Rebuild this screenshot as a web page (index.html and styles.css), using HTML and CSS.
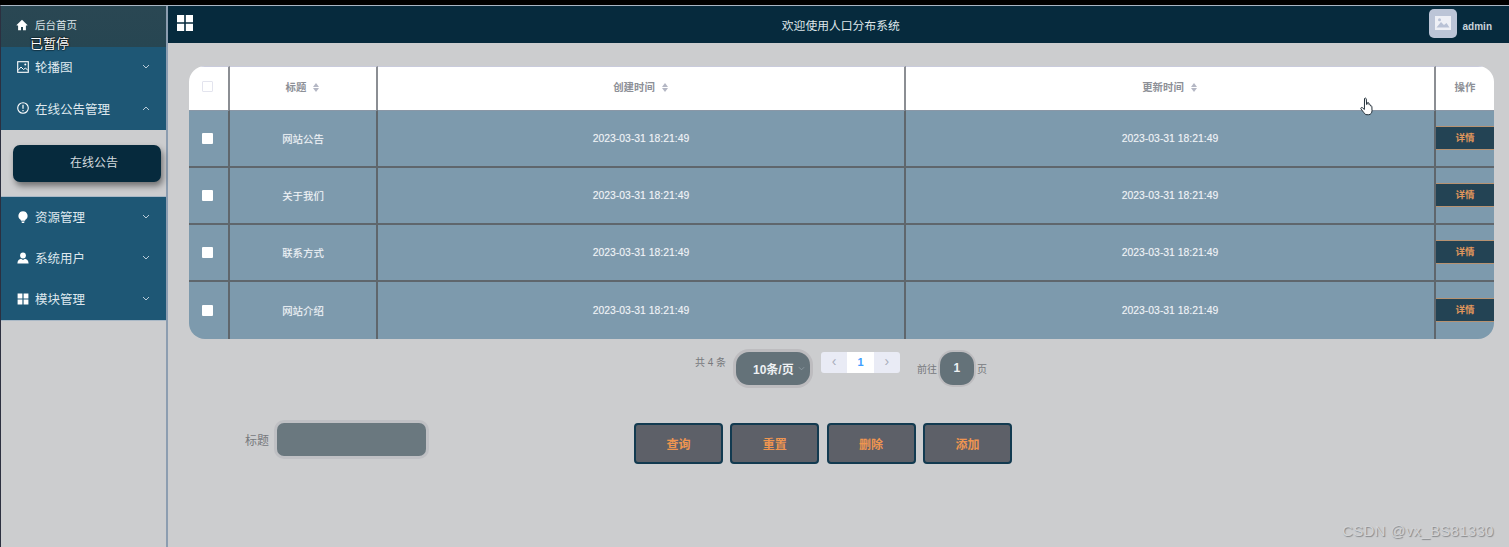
FILE: index.html
```html
<!DOCTYPE html>
<html lang="zh-CN">
<head>
  <meta charset="UTF-8" />
  <title>人口分布系统</title>
  <link rel="stylesheet" href="styles.css">
</head>
<body>

<div class="app">
  <aside class="side">
    <div class="menu-home">
      <svg class="ic-home" viewBox="0 0 12 12"><path fill="#fff" d="M6 .8 .6 6v.6h1.500v4.600h2.900V8h2v3.200h2.900V6.600h1.500V6z"/></svg>
      <span>后台首页</span>
    </div>
    <div class="menu-item">
      <svg class="ic" viewBox="0 0 12 12"><rect x=".7" y=".7" width="10.600" height="10.600" fill="none" stroke="#fff" stroke-width="1.100"/><path fill="none" stroke="#fff" d="M1 9.500 4 6l2.500 2.500L8.500 7l2.500 2.500"/><circle cx="8.300" cy="3.600" r="1" fill="#fff"/></svg>
      <span class="menu-text">轮播图</span>
      <svg class="arrow" viewBox="0 0 8 5"><path d="M1 1l3 3 3-3"/></svg>
    </div>
    <div class="menu-item">
      <svg class="ic" viewBox="0 0 12 12"><circle cx="6" cy="6" r="5.300" fill="none" stroke="#fff" stroke-width="1.100"/><path stroke="#fff" stroke-width="1.200" d="M6 2.800v4M6 8v1.300"/></svg>
      <span class="menu-text">在线公告管理</span>
      <svg class="arrow" viewBox="0 0 8 5"><path d="M1 4l3-3 3 3"/></svg>
    </div>
    <div class="submenu">
      <div class="sub-btn">在线公告</div>
    </div>
    <div class="menu-group">
      <div class="menu-item menu-item-low">
        <svg class="ic" viewBox="0 0 12 12"><path fill="#fff" d="M6 .2a4.600 4.600 0 0 0-2.400 8.500L4 9.800h4l.4-1.100A4.600 4.600 0 0 0 6 .2zM4.500 10.400h3v.8L6.800 12H5.200l-.7-.8z"/></svg>
        <span class="menu-text">资源管理</span>
        <svg class="arrow" viewBox="0 0 8 5"><path d="M1 1l3 3 3-3"/></svg>
      </div>
      <div class="menu-item menu-item-low">
        <svg class="ic" viewBox="0 0 12 12"><circle cx="6" cy="3.500" r="2.900" fill="#fff"/><path fill="#fff" d="M.4 11.500c0-3 2-4.500 3.600-4.700L6 8l2-1.200c1.600.2 3.600 1.700 3.600 4.700z"/></svg>
        <span class="menu-text">系统用户</span>
        <svg class="arrow" viewBox="0 0 8 5"><path d="M1 1l3 3 3-3"/></svg>
      </div>
      <div class="menu-item menu-item-low">
        <svg class="ic" viewBox="0 0 12 12"><path fill="#fff" d="M.6.600h4.800v4.800H.6zM6.600.600h4.800v4.800H6.600zM.6 6.600h4.800v4.800H.6zM6.600 6.600h4.800v4.800H6.600z"/></svg>
        <span class="menu-text">模块管理</span>
        <svg class="arrow" viewBox="0 0 8 5"><path d="M1 1l3 3 3-3"/></svg>
      </div>
    </div>
  </aside>

  <div class="main">
    <header class="topbar">
      <svg class="ic-grid" viewBox="0 0 16 16"><path fill="#fff" d="M0 0h7.200v7.200H0zM8.800 0H16v7.200H8.800zM0 8.800h7.200V16H0zM8.800 8.800H16V16H8.800z"/></svg>
      <div class="top-title">欢迎使用人口分布系统</div>
      <div class="avatar">
        <svg viewBox="0 0 16 14"><path fill="#eef0f6" d="M0 0h16v14H0z"/><path fill="#b9c2d6" d="M1.500 11.500 6 6l3 3 2.500-2 3 4.500z"/><circle cx="4.500" cy="3.800" r="1.500" fill="#b9c2d6"/></svg>
      </div>
      <span class="user-name">admin</span>
    </header>

    <div class="content">
      <table class="grid">
        <thead>
          <tr>
            <th class="col-check"><span class="box box-head"></span></th>
            <th class="col-title">标题<i class="sort"></i></th>
            <th class="col-time">创建时间<i class="sort"></i></th>
            <th class="col-time2">更新时间<i class="sort"></i></th>
            <th class="col-op">操作</th>
          </tr>
        </thead>
        <tbody>
          <tr>
            <td class="cell-check"><span class="box"></span></td>
            <td>网站公告</td>
            <td>2023-03-31 18:21:49</td>
            <td>2023-03-31 18:21:49</td>
            <td class="cell-op"><div class="detail">详情</div></td>
          </tr>
          <tr>
            <td class="cell-check"><span class="box"></span></td>
            <td>关于我们</td>
            <td>2023-03-31 18:21:49</td>
            <td>2023-03-31 18:21:49</td>
            <td class="cell-op"><div class="detail">详情</div></td>
          </tr>
          <tr>
            <td class="cell-check"><span class="box"></span></td>
            <td>联系方式</td>
            <td>2023-03-31 18:21:49</td>
            <td>2023-03-31 18:21:49</td>
            <td class="cell-op"><div class="detail">详情</div></td>
          </tr>
          <tr>
            <td class="cell-check"><span class="box"></span></td>
            <td>网站介绍</td>
            <td>2023-03-31 18:21:49</td>
            <td>2023-03-31 18:21:49</td>
            <td class="cell-op"><div class="detail">详情</div></td>
          </tr>
        </tbody>
      </table>

      <div class="pager">
        <span class="total">共 4 条</span>
        <div class="size-select">10条/页<svg viewBox="0 0 8 5"><path d="M1 1l3 3 3-3"/></svg></div>
        <div class="pages">
          <span class="page-btn">&lsaquo;</span>
          <span class="page-btn page-on">1</span>
          <span class="page-btn">&rsaquo;</span>
        </div>
        <div class="jump">
          <span>前往</span>
          <span class="jump-box">1</span>
          <span>页</span>
        </div>
      </div>

      <div class="search">
        <div class="field">
          <label>标题</label>
          <div class="field-input"></div>
        </div>
        <div class="actions">
          <button>查询</button>
          <button>重置</button>
          <button>删除</button>
          <button>添加</button>
        </div>
      </div>
    </div>
  </div>
</div>

<div class="paused">已暂停</div>
<svg class="hand" viewBox="0 0 14 20"><path fill="#fff" stroke="#23303a" stroke-width="1" d="M4.500 1.500c.8-.8 1.700-.3 1.800.6l.3 5.400.5-.2.200-1.500c.6-.7 1.400-.4 1.500.4l.1 1.300c.6-.5 1.300-.3 1.400.5l.1.900c.7-.3 1.400 0 1.500.8l.1 4c0 2-1.200 4-3.300 4H7c-1.700 0-2.500-1-3.300-2.300L1 12c-.6-1 .5-2 1.400-1.300l2 1.800z"/></svg>
<div class="watermark">CSDN @vx_BS81330</div>

</body>
</html>
```

FILE: styles.css
```css
* {
  box-sizing: border-box;
}
html, body {
  margin: 0;
  height: 547px;
  overflow: hidden;
}
body {
  font-family: "Liberation Sans", "Noto Sans CJK SC", sans-serif;
  background: #cccdcf;
  border-top: 5px solid #000;
  position: relative;
}
.app {
  display: flex;
  height: 542px;
  border-top: 1px solid #a9b6c4;
  border-left: 1px solid #2c3040;
  background: #cccdcf;
}

/* sidebar */
.side {
  width: 167px;
  flex: none;
  border-right: 2px solid #8c9db0;
}
.menu-home {
  height: 41px;
  background: linear-gradient(#2a4753, #274652);
  color: #dfe6ea;
  font-size: 10.500px;
  display: flex;
  align-items: center;
  padding-left: 15px;
  padding-bottom: 4px;
}
.ic-home {
  width: 12px;
  height: 12px;
  margin-right: 7px;
}
.menu-item {
  height: 41.500px;
  background: #1e5775;
  color: #dfe8ee;
  font-size: 12.500px;
  display: flex;
  align-items: center;
  padding-left: 16px;
  padding-bottom: 2px;
}
.menu-item-low {
  height: 41px;
}
.ic {
  width: 12px;
  height: 12px;
  margin-right: 6px;
  flex: none;
}
.menu-text {
  flex: 1;
}
.arrow {
  width: 8px;
  height: 5px;
  margin-right: 16px;
  fill: none;
  stroke: #b9cbd8;
  stroke-width: 1;
}
.submenu {
  height: 67px;
  padding: 15px 5px 0 12px;
  border-bottom: 1px solid #a9b8c6;
}
.sub-btn {
  height: 37px;
  background: #062a3d;
  border-radius: 7px;
  color: #d4dbdf;
  font-size: 12px;
  line-height: 37px;
  text-align: center;
  padding-left: 14px;
  box-shadow: 2px 4px 6px rgba(0, 0, 0, .45);
}
.menu-group {
  border-bottom: 1px solid #a9b8c6;
}

/* top */
.main {
  flex: 1;
  min-width: 0;
}
.topbar {
  height: 37px;
  background: #062a3d;
  display: flex;
  align-items: center;
  color: #dfe6ea;
  padding-left: 9px;
  padding-right: 17px;
}
.ic-grid {
  width: 16px;
  height: 16px;
  margin-top: -4px;
}
.top-title {
  flex: 1;
  text-align: center;
  font-size: 11.800px;
  padding-left: 60px;
  padding-bottom: 1px;
}
.avatar {
  width: 28px;
  height: 29px;
  background: #bcc5d7;
  border-radius: 5px;
  display: flex;
  align-items: center;
  justify-content: center;
  margin-top: -3px;
  margin-right: 6px;
}
.avatar svg {
  width: 16px;
  height: 14px;
}
.user-name {
  font-size: 10px;
  font-weight: bold;
  color: #c9d3da;
  margin-top: 3px;
}

/* table */
.content {
  padding: 23px 15px 0 21px;
}
.grid {
  width: 1305px;
  table-layout: fixed;
  border-collapse: separate;
  border-spacing: 0;
  border-radius: 16px;
  overflow: hidden;
  font-size: 10.400px;
  color: #f0f3f6;
}
.col-check { width: 41px; }
.col-title { width: 148px; }
.col-time { width: 528px; }
.col-time2 { width: 530px; }
.col-op { width: 58px; }
.grid th {
  height: 44px;
  background: #fff;
  color: #8d9097;
  font-weight: bold;
  text-align: center;
  border-right: 2px solid #8b8e93;
  border-top: 1px solid #c9cbdc;
  padding: 0 0 5px;
}
.grid th:last-child,
.grid td:last-child {
  border-right: none;
}
.grid td {
  height: 57px;
  background: #7d9aad;
  text-align: center;
  border-right: 2px solid #5f666c;
  border-top: 2px solid #5f666c;
  padding: 0 0 1px;
  text-shadow: 0 0 1px rgba(255, 255, 255, .35);
}
.grid tbody tr:first-child td {
  height: 56px;
  border-top: 1px solid #8a97a6;
}
.grid tbody tr:last-child td {
  height: 59px;
}
.grid .cell-check,
.grid .col-check {
  padding-right: 3px;
}
.box {
  display: inline-block;
  width: 11px;
  height: 11px;
  background: #fff;
  border-radius: 1px;
  vertical-align: middle;
}
.box-head {
  border: 1px solid #e3e4ee;
}
.sort {
  display: inline-block;
  width: 7px;
  height: 9px;
  margin-left: 7px;
  vertical-align: middle;
  position: relative;
}
.sort::before,
.sort::after {
  content: "";
  position: absolute;
  left: 0;
  border-left: 3.500px solid transparent;
  border-right: 3.500px solid transparent;
}
.sort::before {
  top: 0;
  border-bottom: 4px solid #b4b7c4;
}
.sort::after {
  bottom: 0;
  border-top: 4px solid #b4b7c4;
}
.detail {
  height: 24px;
  line-height: 22px;
  background: #234354;
  color: #e0975c;
  font-size: 9.500px;
  font-weight: bold;
  text-shadow: none;
  border-top: 1px solid #b79271;
  border-bottom: 1px solid #b79271;
}

/* pager */
.pager {
  display: flex;
  align-items: flex-start;
  height: 36px;
  margin-top: 13px;
  padding-left: 506px;
  color: #77797d;
  font-size: 10px;
}
.total {
  margin-top: 2px;
  width: 41px;
}
.size-select {
  width: 74px;
  height: 33px;
  border-radius: 13px;
  background: #647279;
  box-shadow: 0 0 0 3px #bdbcbf;
  color: #eef1f3;
  font-size: 12px;
  font-weight: bold;
  display: flex;
  align-items: center;
  padding-left: 17px;
  gap: 4px;
}
.size-select svg {
  width: 7px;
  height: 5px;
  fill: none;
  stroke: #8f9ca3;
}
.pages {
  display: flex;
  margin-left: 11px;
}
.page-btn {
  width: 26.300px;
  height: 21px;
  background: #e9ebf5;
  color: #a8adba;
  font-size: 14px;
  line-height: 19px;
  text-align: center;
}
.page-btn:first-child {
  border-radius: 3px 0 0 3px;
}
.page-btn:last-child {
  border-radius: 0 3px 3px 0;
}
.page-on {
  background: #fff;
  color: #409eff;
  font-size: 11px;
  font-weight: bold;
  line-height: 21px;
}
.jump {
  display: flex;
  align-items: center;
  gap: 3px;
  height: 33px;
  margin-left: 17px;
}
.jump-box {
  width: 34px;
  height: 33px;
  border-radius: 13px;
  background: #647279;
  box-shadow: 0 0 0 2px #bdbcbf;
  color: #eef1f3;
  font-size: 12px;
  font-weight: bold;
  line-height: 33px;
  text-align: center;
}

/* search */
.search {
  display: flex;
  align-items: flex-start;
  margin-top: 35px;
  padding-left: 56px;
}
.field {
  display: flex;
  align-items: center;
  width: 389px;
  color: #77797d;
  font-size: 12px;
}
.field label {
  margin-right: 8px;
}
.field-input {
  width: 149px;
  height: 33px;
  background: #6a787f;
  border-radius: 7px;
  box-shadow: 0 0 0 3px #bfc0c4;
}
.actions {
  display: flex;
  gap: 7.300px;
}
.actions button {
  width: 89px;
  height: 41px;
  background: #5d6068;
  border: 2px solid #123a50;
  border-radius: 4px;
  color: #ef9550;
  font-family: inherit;
  font-size: 12px;
  font-weight: bold;
  padding: 0;
}

/* stuff on top of the page */
.paused {
  position: absolute;
  left: 30px;
  top: 31px;
  color: #fff;
  font-size: 13px;
  line-height: 15px;
  text-shadow: 0 0 2px #000, 0 0 1px #000, 0 0 1px #000;
}
.hand {
  position: absolute;
  left: 1360px;
  top: 92px;
  width: 14px;
  height: 20px;
}
.watermark {
  position: absolute;
  left: 1342px;
  top: 517px;
  color: #d2d3d5;
  font-size: 15px;
  letter-spacing: .3px;
  text-shadow: 1px 1px 1px #85878a;
}
```
